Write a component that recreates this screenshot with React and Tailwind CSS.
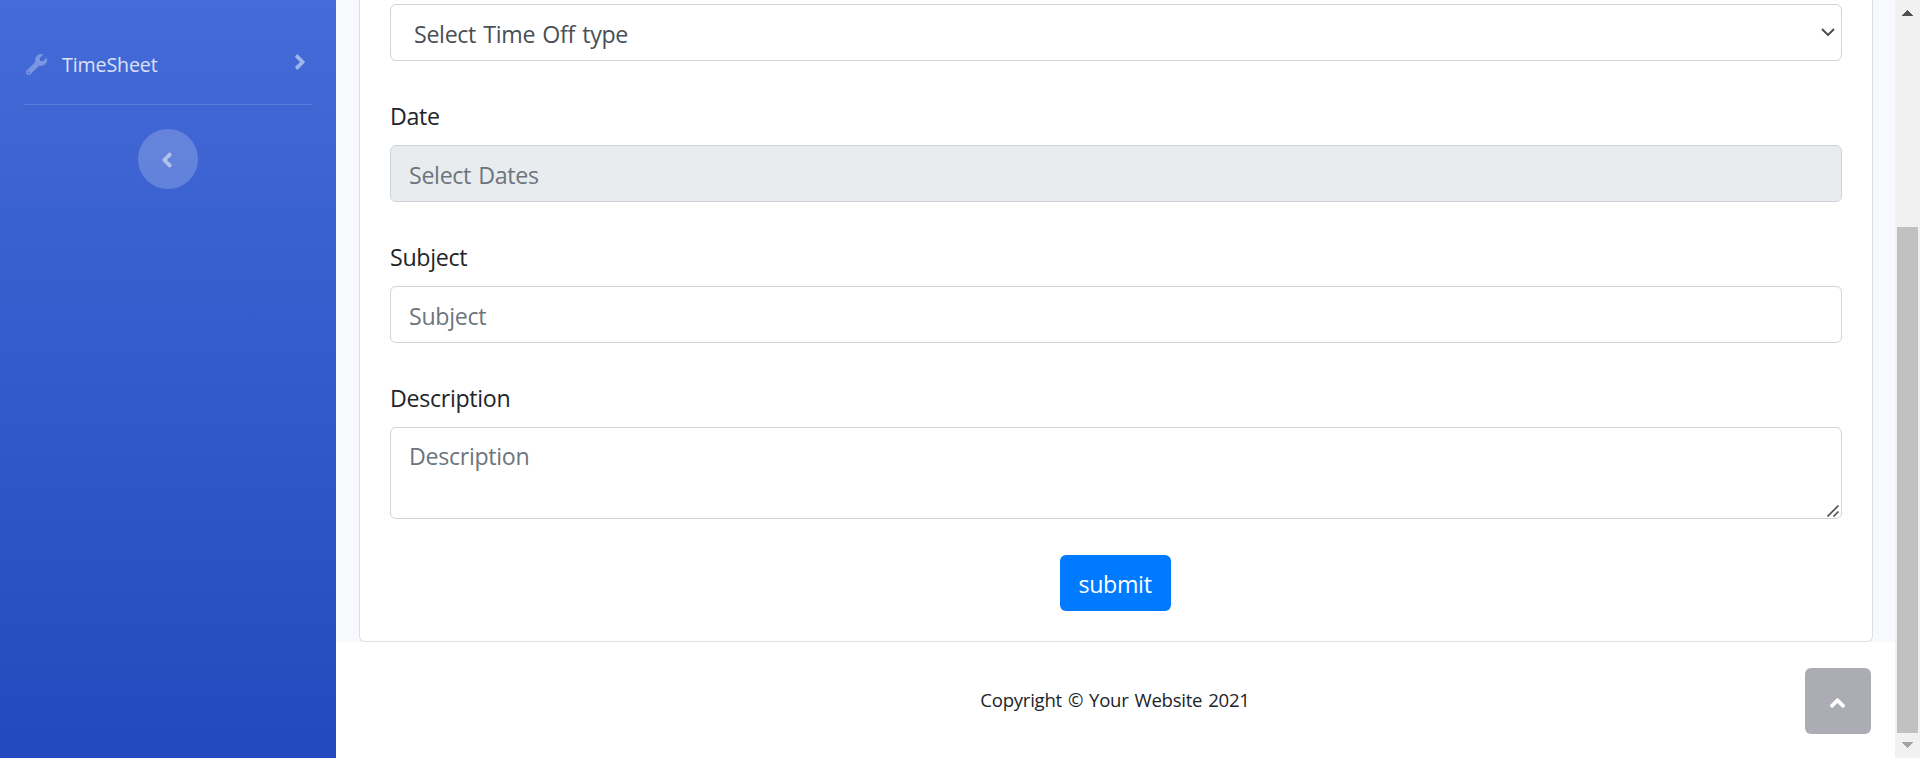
import React from "react";
import { FaWrench, FaAngleLeft, FaAngleRight, FaAngleUp } from "react-icons/fa";

const control =
  "block w-full rounded-[6px] border border-[#ced4da] px-[18px] text-[23.2px] leading-9 tracking-[-0.32px] [word-spacing:1.5px] text-[#495057] placeholder:text-[#6c757d] placeholder:opacity-100 outline-none";

function Field({ label, children }) {
  return (
    <div className="mb-6 flex flex-col">
      <label className="mb-[11px] mt-[13px] h-9 text-[23.2px] leading-9 tracking-[-0.32px] text-[#212529]">{label}</label>
      {children}
    </div>
  );
}

function Sidebar() {
  return (
    <aside className="flex w-[336px] shrink-0 flex-col bg-[linear-gradient(180deg,#456bd8,#224abe)] px-6">
      <a className="mt-[46px] flex h-9 items-center">
        <FaWrench className="ml-[2px] size-[21px] text-white/30" />
        <span className="ml-[15px] mt-[2px] grow text-[19.6px] leading-9 tracking-[-0.12px] text-white/80">TimeSheet</span>
        <FaAngleRight className="mr-[6px] h-6 w-3 -translate-y-[2px] text-white/50" />
      </a>
      <hr className="mt-[22px] border-t border-white/15" />
      <button className="mt-6 flex size-[60px] items-center justify-center self-center rounded-full bg-white/20">
        <FaAngleLeft className="mr-[2px] mt-[2px] h-6 w-3 text-white/50" />
      </button>
    </aside>
  );
}

function Scrollbar() {
  return (
    <div className="flex w-[25px] shrink-0 flex-col items-center bg-[#f1f1f1]">
      <svg className="mt-[10px] h-[6px] w-[11px]" viewBox="0 0 11 6" shapeRendering="crispEdges">
        <path d="M0 6L5.5 0L11 6Z" fill="#505050" />
      </svg>
      <div className="mt-[211px] h-[506px] w-[21px] bg-[#c1c1c1]" />
      <svg className="mt-[9px] h-[6px] w-[11px]" viewBox="0 0 11 6" shapeRendering="crispEdges">
        <path d="M0 0L5.5 6L11 0Z" fill="#a3a3a3" />
      </svg>
    </div>
  );
}

export default function App() {
  return (
    <div className="relative flex h-[758px] w-[1920px] overflow-hidden bg-white font-['Open_Sans','Noto_Sans',sans-serif]">
      <Sidebar />
      <div className="flex grow flex-col">
        <main className="h-[642px] bg-[#f8f9fc] pl-[23px] pr-[22px]">
          <form className="flex h-full flex-col rounded-b-[6px] border border-t-0 border-[#dfdfdf] bg-white px-[30px] pt-1">
            <div className="relative mb-6">
              <select className={`${control} h-[57px] appearance-none bg-white pl-[23px] pt-[3px]`}>
                <option>Select Time Off type</option>
              </select>
              <svg className="pointer-events-none absolute right-[7px] top-[24px] h-[8px] w-[14px]" viewBox="0 0 14 8" fill="none">
                <path d="M1 1L7 7L13 1" stroke="#495057" strokeWidth="2" />
              </svg>
            </div>
            <Field label="Date">
              <input className={`${control} h-[57px] bg-[#e9ecef] pt-[3px]`} placeholder="Select Dates" readOnly />
            </Field>
            <Field label="Subject">
              <input className={`${control} h-[57px] bg-white pt-[3px]`} placeholder="Subject" />
            </Field>
            <Field label="Description">
              <div className="relative">
                <textarea className={`${control} h-[92px] resize-none bg-white pt-[10px]`} placeholder="Description" />
                <svg className="pointer-events-none absolute bottom-[2px] right-[2px] h-[12px] w-[13px]" viewBox="0 0 13 12" fill="none">
                  <path d="M0.5 11.5L11.5 0.5M6.5 11.5L11.5 6.5" stroke="#505050" strokeWidth="1.6" />
                </svg>
              </div>
            </Field>
            <button
              type="button"
              className="mr-[2px] mt-3 h-14 w-[111px] self-center rounded-[6px] bg-[#007bff] pt-[2px] text-[23.2px] leading-9 tracking-[-0.3px] text-white"
            >
              submit
            </button>
          </form>
        </main>
        <footer className="flex grow items-center justify-center pr-px text-[18.6px] tracking-[-0.27px] text-[#212529] [word-spacing:1.4px]">
          <span>Copyright © Your Website 2021</span>
        </footer>
      </div>
      <Scrollbar />
      <a className="absolute left-[1805px] top-[668px] flex size-[66px] items-center justify-center rounded-[6px] bg-[#5a5c69]/50">
        <FaAngleUp className="mr-px mt-[4px] h-6 w-[15px] text-white" />
      </a>
    </div>
  );
}
